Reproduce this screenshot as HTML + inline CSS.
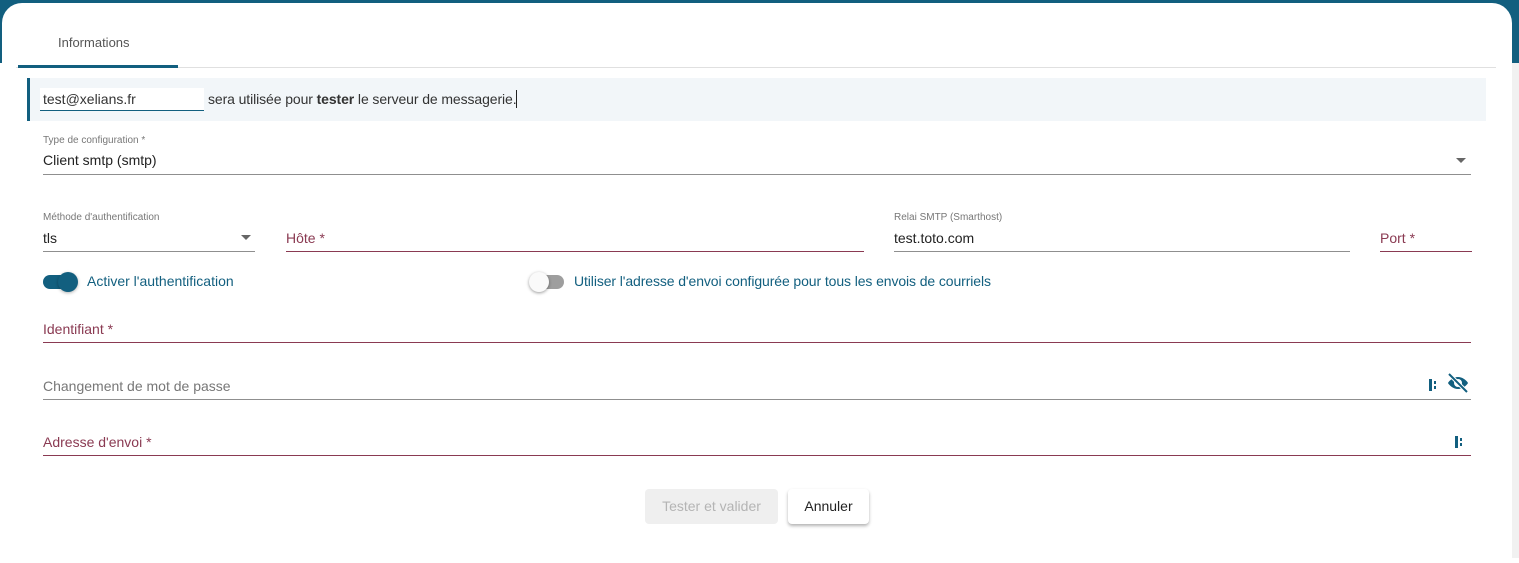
<!DOCTYPE html>
<html><head><meta charset="utf-8"><style>
*{box-sizing:border-box;margin:0;padding:0}
body{width:1519px;height:558px;overflow:hidden;background:#fff;font-family:"Liberation Sans",Arial,sans-serif;position:relative}
.a{position:absolute}
.lbl{font-size:10px;color:#777}
.val{font-size:14px;color:#222}
.red{color:#8a3a52;font-size:14px}
.ln{height:1px;background:#8f8f8f}
.lr{height:1px;background:#8a3a52}
</style></head><body>
<div class="a" style="left:0;top:0;width:1519px;height:63px;background:#125f7f"></div>
<div class="a" style="left:1512px;top:63px;width:7px;height:495px;background:#f1f1f1"></div>
<div class="a" style="left:2px;top:3px;width:1510px;height:560px;background:#fff;border-radius:20px 20px 0 0"></div>
<div class="a" style="left:58px;top:35px;font-size:13px;color:#555">Informations</div>
<div class="a" style="left:16px;top:67px;width:1480px;height:1px;background:#e0e0e0"></div>
<div class="a" style="left:18px;top:65px;width:160px;height:3px;background:#125f7f"></div>
<div class="a" style="left:27px;top:78px;width:1459px;height:43px;background:#f2f6f9;border-left:3px solid #125f7f"></div>
<div class="a" style="left:40px;top:88px;width:164px;height:23px;background:#fff;border-bottom:1px solid #125f7f"></div>
<div class="a" style="left:43px;top:91px;font-size:14px;color:#333">test@xelians.fr</div>
<div class="a" style="left:208px;top:91px;font-size:14px;color:#333;letter-spacing:-0.1px">sera utilisée pour <b>tester</b> le serveur de messagerie.</div>
<div class="a" style="left:516px;top:90px;width:1px;height:18px;background:#222"></div>
<div class="a lbl" style="left:43px;top:135px">Type de configuration *</div>
<div class="a val" style="left:43px;top:152px">Client smtp (smtp)</div>
<div class="a" style="left:1456px;top:158px;border:5px solid transparent;border-top:5px solid #666"></div>
<div class="a ln" style="left:43px;top:174px;width:1428px"></div>
<div class="a lbl" style="left:43px;top:212px">Méthode d'authentification</div>
<div class="a val" style="left:43px;top:230px">tls</div>
<div class="a" style="left:241px;top:235px;border:5px solid transparent;border-top:5px solid #666"></div>
<div class="a ln" style="left:43px;top:251px;width:212px"></div>
<div class="a red" style="left:286px;top:230px">Hôte *</div>
<div class="a lr" style="left:286px;top:251px;width:578px"></div>
<div class="a lbl" style="left:894px;top:212px">Relai SMTP (Smarthost)</div>
<div class="a val" style="left:894px;top:230px">test.toto.com</div>
<div class="a ln" style="left:894px;top:251px;width:456px"></div>
<div class="a red" style="left:1380px;top:230px">Port *</div>
<div class="a lr" style="left:1380px;top:251px;width:92px"></div>
<div class="a" style="left:43px;top:275px;width:34px;height:14px;border-radius:7px;background:#125f7f"></div>
<div class="a" style="left:58px;top:272px;width:20px;height:20px;border-radius:50%;background:#125f7f;box-shadow:0 1px 3px rgba(0,0,0,.3)"></div>
<div class="a" style="left:87px;top:273px;font-size:14px;color:#125f7f">Activer l'authentification</div>
<div class="a" style="left:530px;top:275px;width:34px;height:14px;border-radius:7px;background:#9e9e9e"></div>
<div class="a" style="left:529px;top:272px;width:20px;height:20px;border-radius:50%;background:#fafafa;box-shadow:0 1px 3px rgba(0,0,0,.4)"></div>
<div class="a" style="left:574px;top:273px;font-size:14px;color:#125f7f;letter-spacing:-0.1px">Utiliser l'adresse d'envoi configurée pour tous les envois de courriels</div>
<div class="a red" style="left:43px;top:321px">Identifiant *</div>
<div class="a lr" style="left:43px;top:342px;width:1428px"></div>
<div class="a" style="left:43px;top:378px;font-size:14px;color:#777">Changement de mot de passe</div>
<div class="a ln" style="left:43px;top:399px;width:1428px"></div>
<svg class="a" style="left:1428px;top:377px" width="12" height="16" viewBox="0 0 12 16"><rect x="1" y="2" width="3" height="12" fill="#125f7f"/><rect x="6" y="4" width="2" height="3" fill="#125f7f"/><rect x="6" y="9" width="2" height="3" fill="#125f7f"/></svg>
<svg class="a" style="left:1444px;top:371px" width="28" height="24" viewBox="0 0 24 24"><path d="M12 6c-5 0-9 4-10 6 1 2 5 6 10 6s9-4 10-6c-1-2-5-6-10-6zm0 10a4 4 0 110-8 4 4 0 010 8z" fill="#125f7f"/><path d="M3 3l18 18" stroke="#fff" stroke-width="4"/><path d="M3 3l18 18" stroke="#125f7f" stroke-width="2"/></svg>
<div class="a red" style="left:43px;top:434px">Adresse d'envoi *</div>
<div class="a lr" style="left:43px;top:455px;width:1428px"></div>
<svg class="a" style="left:1454px;top:434px" width="12" height="16" viewBox="0 0 12 16"><rect x="1" y="2" width="3" height="12" fill="#125f7f"/><rect x="6" y="4" width="2" height="3" fill="#125f7f"/><rect x="6" y="9" width="2" height="3" fill="#125f7f"/></svg>
<div class="a" style="left:645px;top:489px;width:133px;height:35px;border-radius:4px;background:#efefef;color:#b4b4b4;font-size:14px;text-align:center;line-height:35px">Tester et valider</div>
<div class="a" style="left:788px;top:489px;width:81px;height:35px;border-radius:4px;background:#fff;box-shadow:0 2px 3px rgba(0,0,0,.3);color:#222;font-size:14px;text-align:center;line-height:35px">Annuler</div>
</body></html>
